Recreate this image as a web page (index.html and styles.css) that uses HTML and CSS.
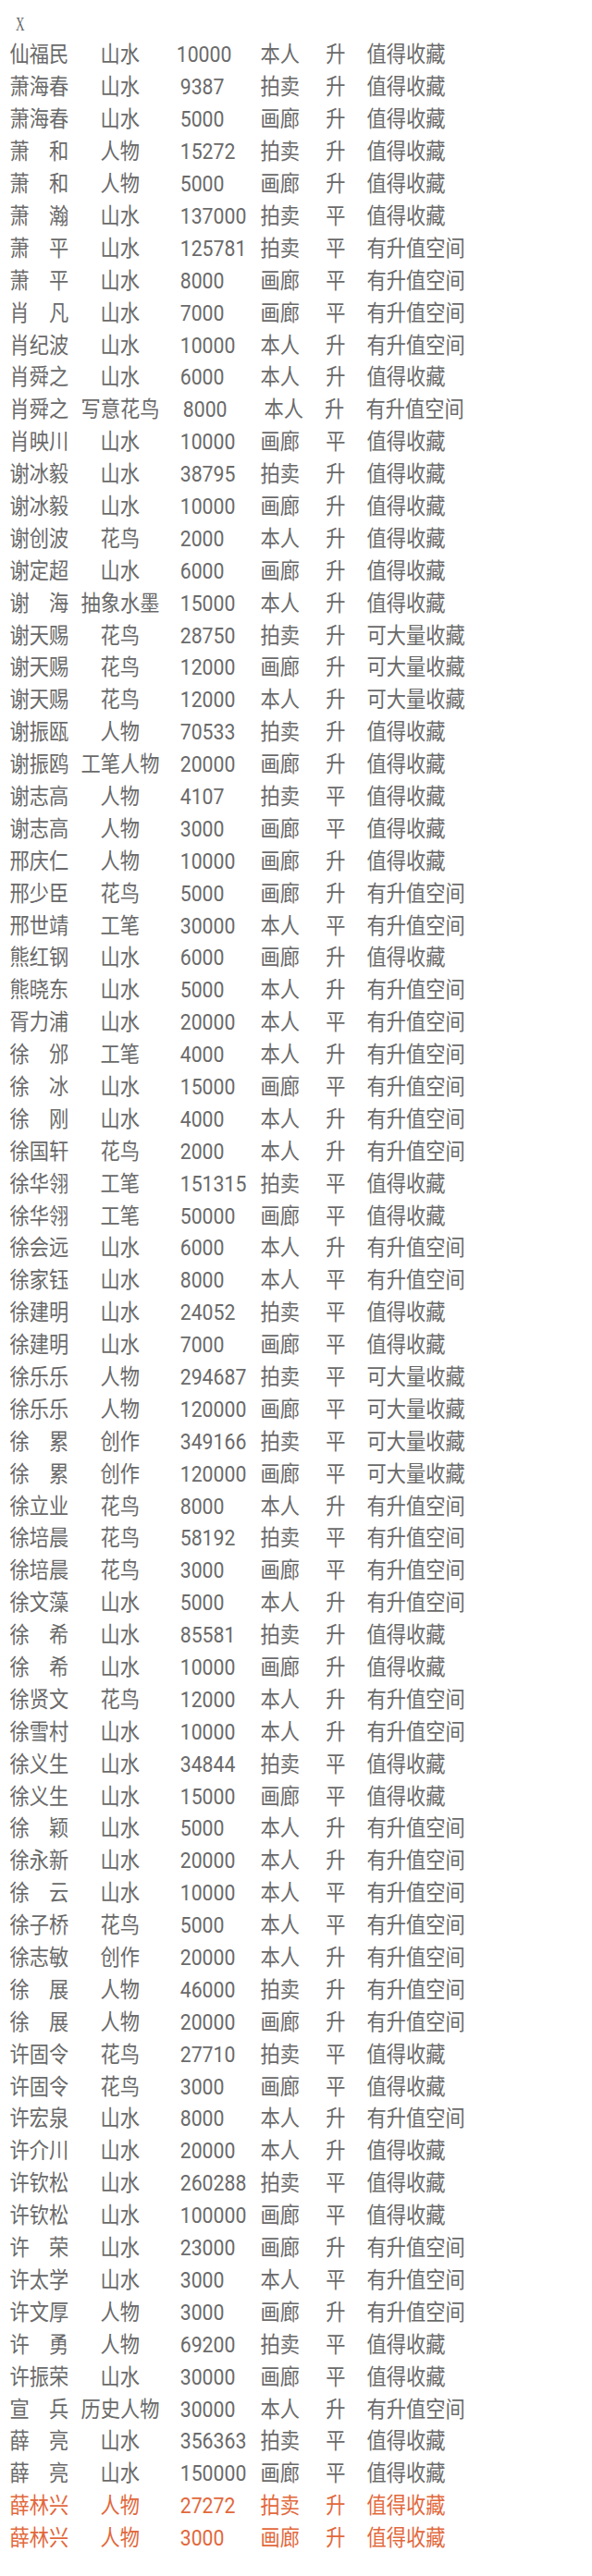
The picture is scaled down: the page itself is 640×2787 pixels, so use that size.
FILE: index.html
```html
<!DOCTYPE html>
<html lang="zh-CN">
<head>
<meta charset="utf-8">
<title>画家行情</title>
<link rel="stylesheet" href="styles.css">
</head>
<body>
<div class="top"><span class="close">X</span></div>
<div class="sheet">
<div class="row first"><span>仙福民</span><span class="cat">山水</span><span class="num">10000</span><span>本人</span><span>升</span><span>值得收藏</span></div>
<div class="row"><span>萧海春</span><span class="cat">山水</span><span class="num">9387</span><span>拍卖</span><span>升</span><span>值得收藏</span></div>
<div class="row"><span>萧海春</span><span class="cat">山水</span><span class="num">5000</span><span>画廊</span><span>升</span><span>值得收藏</span></div>
<div class="row"><span>萧　和</span><span class="cat">人物</span><span class="num">15272</span><span>拍卖</span><span>升</span><span>值得收藏</span></div>
<div class="row"><span>萧　和</span><span class="cat">人物</span><span class="num">5000</span><span>画廊</span><span>升</span><span>值得收藏</span></div>
<div class="row"><span>萧　瀚</span><span class="cat">山水</span><span class="num">137000</span><span>拍卖</span><span>平</span><span>值得收藏</span></div>
<div class="row"><span>萧　平</span><span class="cat">山水</span><span class="num">125781</span><span>拍卖</span><span>平</span><span>有升值空间</span></div>
<div class="row"><span>萧　平</span><span class="cat">山水</span><span class="num">8000</span><span>画廊</span><span>平</span><span>有升值空间</span></div>
<div class="row"><span>肖　凡</span><span class="cat">山水</span><span class="num">7000</span><span>画廊</span><span>平</span><span>有升值空间</span></div>
<div class="row"><span>肖纪波</span><span class="cat">山水</span><span class="num">10000</span><span>本人</span><span>升</span><span>有升值空间</span></div>
<div class="row"><span>肖舜之</span><span class="cat">山水</span><span class="num">6000</span><span>本人</span><span>升</span><span>值得收藏</span></div>
<div class="row skew"><span>肖舜之</span><span class="cat">写意花鸟</span><span class="num">8000</span><span>本人</span><span>升</span><span>有升值空间</span></div>
<div class="row"><span>肖映川</span><span class="cat">山水</span><span class="num">10000</span><span>画廊</span><span>平</span><span>值得收藏</span></div>
<div class="row"><span>谢冰毅</span><span class="cat">山水</span><span class="num">38795</span><span>拍卖</span><span>升</span><span>值得收藏</span></div>
<div class="row"><span>谢冰毅</span><span class="cat">山水</span><span class="num">10000</span><span>画廊</span><span>升</span><span>值得收藏</span></div>
<div class="row"><span>谢创波</span><span class="cat">花鸟</span><span class="num">2000</span><span>本人</span><span>升</span><span>值得收藏</span></div>
<div class="row"><span>谢定超</span><span class="cat">山水</span><span class="num">6000</span><span>画廊</span><span>升</span><span>值得收藏</span></div>
<div class="row"><span>谢　海</span><span class="cat">抽象水墨</span><span class="num">15000</span><span>本人</span><span>升</span><span>值得收藏</span></div>
<div class="row"><span>谢天赐</span><span class="cat">花鸟</span><span class="num">28750</span><span>拍卖</span><span>升</span><span>可大量收藏</span></div>
<div class="row"><span>谢天赐</span><span class="cat">花鸟</span><span class="num">12000</span><span>画廊</span><span>升</span><span>可大量收藏</span></div>
<div class="row"><span>谢天赐</span><span class="cat">花鸟</span><span class="num">12000</span><span>本人</span><span>升</span><span>可大量收藏</span></div>
<div class="row"><span>谢振瓯</span><span class="cat">人物</span><span class="num">70533</span><span>拍卖</span><span>升</span><span>值得收藏</span></div>
<div class="row"><span>谢振鸥</span><span class="cat">工笔人物</span><span class="num">20000</span><span>画廊</span><span>升</span><span>值得收藏</span></div>
<div class="row"><span>谢志高</span><span class="cat">人物</span><span class="num">4107</span><span>拍卖</span><span>平</span><span>值得收藏</span></div>
<div class="row"><span>谢志高</span><span class="cat">人物</span><span class="num">3000</span><span>画廊</span><span>平</span><span>值得收藏</span></div>
<div class="row"><span>邢庆仁</span><span class="cat">人物</span><span class="num">10000</span><span>画廊</span><span>升</span><span>值得收藏</span></div>
<div class="row"><span>邢少臣</span><span class="cat">花鸟</span><span class="num">5000</span><span>画廊</span><span>升</span><span>有升值空间</span></div>
<div class="row"><span>邢世靖</span><span class="cat">工笔</span><span class="num">30000</span><span>本人</span><span>平</span><span>有升值空间</span></div>
<div class="row"><span>熊红钢</span><span class="cat">山水</span><span class="num">6000</span><span>画廊</span><span>升</span><span>值得收藏</span></div>
<div class="row"><span>熊晓东</span><span class="cat">山水</span><span class="num">5000</span><span>本人</span><span>升</span><span>有升值空间</span></div>
<div class="row"><span>胥力浦</span><span class="cat">山水</span><span class="num">20000</span><span>本人</span><span>平</span><span>有升值空间</span></div>
<div class="row"><span>徐　邠</span><span class="cat">工笔</span><span class="num">4000</span><span>本人</span><span>升</span><span>有升值空间</span></div>
<div class="row"><span>徐　冰</span><span class="cat">山水</span><span class="num">15000</span><span>画廊</span><span>平</span><span>有升值空间</span></div>
<div class="row"><span>徐　刚</span><span class="cat">山水</span><span class="num">4000</span><span>本人</span><span>升</span><span>有升值空间</span></div>
<div class="row"><span>徐国轩</span><span class="cat">花鸟</span><span class="num">2000</span><span>本人</span><span>升</span><span>有升值空间</span></div>
<div class="row"><span>徐华翎</span><span class="cat">工笔</span><span class="num">151315</span><span>拍卖</span><span>平</span><span>值得收藏</span></div>
<div class="row"><span>徐华翎</span><span class="cat">工笔</span><span class="num">50000</span><span>画廊</span><span>平</span><span>值得收藏</span></div>
<div class="row"><span>徐会远</span><span class="cat">山水</span><span class="num">6000</span><span>本人</span><span>升</span><span>有升值空间</span></div>
<div class="row"><span>徐家钰</span><span class="cat">山水</span><span class="num">8000</span><span>本人</span><span>平</span><span>有升值空间</span></div>
<div class="row"><span>徐建明</span><span class="cat">山水</span><span class="num">24052</span><span>拍卖</span><span>平</span><span>值得收藏</span></div>
<div class="row"><span>徐建明</span><span class="cat">山水</span><span class="num">7000</span><span>画廊</span><span>平</span><span>值得收藏</span></div>
<div class="row"><span>徐乐乐</span><span class="cat">人物</span><span class="num">294687</span><span>拍卖</span><span>平</span><span>可大量收藏</span></div>
<div class="row"><span>徐乐乐</span><span class="cat">人物</span><span class="num">120000</span><span>画廊</span><span>平</span><span>可大量收藏</span></div>
<div class="row"><span>徐　累</span><span class="cat">创作</span><span class="num">349166</span><span>拍卖</span><span>平</span><span>可大量收藏</span></div>
<div class="row"><span>徐　累</span><span class="cat">创作</span><span class="num">120000</span><span>画廊</span><span>平</span><span>可大量收藏</span></div>
<div class="row"><span>徐立业</span><span class="cat">花鸟</span><span class="num">8000</span><span>本人</span><span>升</span><span>有升值空间</span></div>
<div class="row"><span>徐培晨</span><span class="cat">花鸟</span><span class="num">58192</span><span>拍卖</span><span>平</span><span>有升值空间</span></div>
<div class="row"><span>徐培晨</span><span class="cat">花鸟</span><span class="num">3000</span><span>画廊</span><span>平</span><span>有升值空间</span></div>
<div class="row"><span>徐文藻</span><span class="cat">山水</span><span class="num">5000</span><span>本人</span><span>升</span><span>有升值空间</span></div>
<div class="row"><span>徐　希</span><span class="cat">山水</span><span class="num">85581</span><span>拍卖</span><span>升</span><span>值得收藏</span></div>
<div class="row"><span>徐　希</span><span class="cat">山水</span><span class="num">10000</span><span>画廊</span><span>升</span><span>值得收藏</span></div>
<div class="row"><span>徐贤文</span><span class="cat">花鸟</span><span class="num">12000</span><span>本人</span><span>升</span><span>有升值空间</span></div>
<div class="row"><span>徐雪村</span><span class="cat">山水</span><span class="num">10000</span><span>本人</span><span>升</span><span>有升值空间</span></div>
<div class="row"><span>徐义生</span><span class="cat">山水</span><span class="num">34844</span><span>拍卖</span><span>平</span><span>值得收藏</span></div>
<div class="row"><span>徐义生</span><span class="cat">山水</span><span class="num">15000</span><span>画廊</span><span>平</span><span>值得收藏</span></div>
<div class="row"><span>徐　颖</span><span class="cat">山水</span><span class="num">5000</span><span>本人</span><span>升</span><span>有升值空间</span></div>
<div class="row"><span>徐永新</span><span class="cat">山水</span><span class="num">20000</span><span>本人</span><span>升</span><span>有升值空间</span></div>
<div class="row"><span>徐　云</span><span class="cat">山水</span><span class="num">10000</span><span>本人</span><span>平</span><span>有升值空间</span></div>
<div class="row"><span>徐子桥</span><span class="cat">花鸟</span><span class="num">5000</span><span>本人</span><span>平</span><span>有升值空间</span></div>
<div class="row"><span>徐志敏</span><span class="cat">创作</span><span class="num">20000</span><span>本人</span><span>升</span><span>有升值空间</span></div>
<div class="row"><span>徐　展</span><span class="cat">人物</span><span class="num">46000</span><span>拍卖</span><span>升</span><span>有升值空间</span></div>
<div class="row"><span>徐　展</span><span class="cat">人物</span><span class="num">20000</span><span>画廊</span><span>升</span><span>有升值空间</span></div>
<div class="row"><span>许固令</span><span class="cat">花鸟</span><span class="num">27710</span><span>拍卖</span><span>平</span><span>值得收藏</span></div>
<div class="row"><span>许固令</span><span class="cat">花鸟</span><span class="num">3000</span><span>画廊</span><span>平</span><span>值得收藏</span></div>
<div class="row"><span>许宏泉</span><span class="cat">山水</span><span class="num">8000</span><span>本人</span><span>升</span><span>有升值空间</span></div>
<div class="row"><span>许介川</span><span class="cat">山水</span><span class="num">20000</span><span>本人</span><span>升</span><span>值得收藏</span></div>
<div class="row"><span>许钦松</span><span class="cat">山水</span><span class="num">260288</span><span>拍卖</span><span>平</span><span>值得收藏</span></div>
<div class="row"><span>许钦松</span><span class="cat">山水</span><span class="num">100000</span><span>画廊</span><span>平</span><span>值得收藏</span></div>
<div class="row"><span>许　荣</span><span class="cat">山水</span><span class="num">23000</span><span>画廊</span><span>升</span><span>有升值空间</span></div>
<div class="row"><span>许太学</span><span class="cat">山水</span><span class="num">3000</span><span>本人</span><span>平</span><span>有升值空间</span></div>
<div class="row"><span>许文厚</span><span class="cat">人物</span><span class="num">3000</span><span>画廊</span><span>升</span><span>有升值空间</span></div>
<div class="row"><span>许　勇</span><span class="cat">人物</span><span class="num">69200</span><span>拍卖</span><span>平</span><span>值得收藏</span></div>
<div class="row"><span>许振荣</span><span class="cat">山水</span><span class="num">30000</span><span>画廊</span><span>平</span><span>值得收藏</span></div>
<div class="row"><span>宣　兵</span><span class="cat">历史人物</span><span class="num">30000</span><span>本人</span><span>升</span><span>有升值空间</span></div>
<div class="row"><span>薛　亮</span><span class="cat">山水</span><span class="num">356363</span><span>拍卖</span><span>平</span><span>值得收藏</span></div>
<div class="row"><span>薛　亮</span><span class="cat">山水</span><span class="num">150000</span><span>画廊</span><span>平</span><span>值得收藏</span></div>
<div class="row hot"><span>薛林兴</span><span class="cat">人物</span><span class="num">27272</span><span>拍卖</span><span>升</span><span>值得收藏</span></div>
<div class="row hot"><span>薛林兴</span><span class="cat">人物</span><span class="num">3000</span><span>画廊</span><span>升</span><span>值得收藏</span></div>
</div>
</body>
</html>
```

FILE: styles.css
```css
html, body {
  margin: 0;
  padding: 0;
  background: #ffffff;
}

.top {
  height: 22px;
  padding: 14.9px 0 5.6px 17px;
  font-family: "Liberation Serif", serif;
  font-size: 22px;
  line-height: 22px;
  color: #666666;
}

.close {
  display: inline-block;
  transform: scaleX(0.6);
  transform-origin: left center;
}

.sheet {
  transform: scaleX(0.885);
  transform-origin: 0 0;
  font-family: Roboto, "Noto Sans CJK SC", sans-serif;
  font-size: 24px;
  color: #6a6a6a;
}

.row {
  display: grid;
  grid-template-columns: 87px 95px 124px 80px 50px 1fr;
  height: 34.9px;
  line-height: 34.9px;
  padding-left: 12px;
  white-space: nowrap;
}

.cat {
  text-align: center;
}

.num {
  padding-left: 26px;
}

.first .num {
  padding-left: 21.5px;
}

.skew .num {
  padding-left: 29.5px;
}

.skew span:nth-child(4) {
  padding-left: 4.5px;
}

.skew span:nth-child(5) {
  margin-left: -1.5px;
}

.skew span:nth-child(6) {
  margin-left: -1px;
}

.hot {
  color: #e2683c;
}
```
